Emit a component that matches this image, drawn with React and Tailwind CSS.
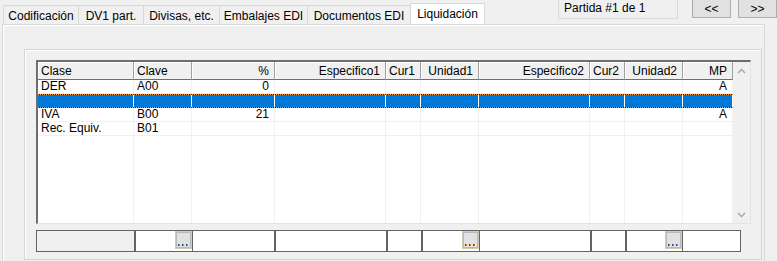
import React from 'react';

const tabs = [
  { label: 'Codificación', w: 'w-[75px]' },
  { label: 'DV1 part.', w: 'w-[65px]' },
  { label: 'Divisas, etc.', w: 'w-[76px]' },
  { label: 'Embalajes EDI', w: 'w-[88px]' },
  { label: 'Documentos EDI', w: 'w-[103px]' },
];

const cols = [
  { h: 'Clase', w: 'w-[96px]', a: 'l' },
  { h: 'Clave', w: 'w-[58px]', a: 'l' },
  { h: '%', w: 'w-[83px]', a: 'r' },
  { h: 'Especifico1', w: 'w-[111px]', a: 'r' },
  { h: 'Cur1', w: 'w-[35px]', a: 'r' },
  { h: 'Unidad1', w: 'w-[58px]', a: 'r' },
  { h: 'Especifico2', w: 'w-[111px]', a: 'r' },
  { h: 'Cur2', w: 'w-[35px]', a: 'r' },
  { h: 'Unidad2', w: 'w-[58px]', a: 'r' },
  { h: 'MP', w: 'w-[50px]', a: 'r' },
];

const rows = [
  ['DER', 'A00', '0', '', '', '', '', '', '', 'A'],
  null,
  ['IVA', 'B00', '21', '', '', '', '', '', '', 'A'],
  ['Rec. Equiv.', 'B01', '', '', '', '', '', '', '', ''],
];

const foot = [
  { w: 'w-[97px]', sep: '', bg: 'bg-[#f0f0f0]' },
  { w: 'w-[58px]', sep: 'border-l-2', bg: 'bg-white', btn: true },
  { w: 'w-[82px]', sep: 'border-l', bg: 'bg-white' },
  { w: 'w-[112px]', sep: 'border-l-2', bg: 'bg-white' },
  { w: 'w-[35px]', sep: 'border-l-2', bg: 'bg-white' },
  { w: 'w-[58px]', sep: 'border-l-2', bg: 'bg-white', btn: true },
  { w: 'w-[111px]', sep: 'border-l', bg: 'bg-white' },
  { w: 'w-[35px]', sep: 'border-l-2', bg: 'bg-white' },
  { w: 'w-[57px]', sep: 'border-l-2', bg: 'bg-white', btn: true },
  { w: 'w-[58px]', sep: 'border-l', bg: 'bg-white' },
];

function Chevron({ up }) {
  return (
    <svg width="9" height="6" viewBox="0 0 9 6">
      <path
        d={up ? 'M1 5 L4.5 1.5 L8 5' : 'M1 1 L4.5 4.5 L8 1'}
        fill="none"
        stroke="#a6a6a6"
        strokeWidth="1.4"
      />
    </svg>
  );
}

function DotsButton() {
  return (
    <div className="ml-auto w-[17px] h-[18px] border border-[#cfcdb4] bg-[#e1e1e1] shadow-[inset_0_0_0_1px_#b9b9b9]">
      <div className="flex gap-[2px] pl-[2px] pt-[12px]">
        {[0, 1, 2].map((i) => (
          <div key={i} className="flex h-[2px]">
            <div className="w-px h-[2px] bg-[#1d4f91]" />
            <div className="w-px h-[2px] bg-[#e0801c]" />
          </div>
        ))}
      </div>
    </div>
  );
}

export default function App() {
  return (
    <div className="w-[777px] h-[261px] bg-[#f0f0f0] overflow-hidden text-[12px] leading-[14px] text-black font-['Liberation_Sans',Arial,sans-serif]">
      {/* top strip */}
      <div className="flex h-[24px]">
        <div className="flex items-end pl-[3px]">
          {tabs.map((t) => (
            <div
              key={t.label}
              className={`${t.w} h-[19px] border-l border-t border-[#d9d9d9] bg-[#f0f0f0] flex justify-center pt-[3px] whitespace-nowrap`}
            >
              {t.label}
            </div>
          ))}
          <div className="w-[75px] h-[21px] border-l border-t border-r border-[#d9d9d9] bg-white flex justify-center pt-[3px] whitespace-nowrap">
            Liquidación
          </div>
        </div>
        <div className="ml-[73px] w-[128px] h-[19px] border-x border-b border-[#dadada] pl-[5px] pt-[1px] whitespace-nowrap">
          Partida #1 de 1
        </div>
        <div className="ml-[14px] -mt-[1px] w-[39px] h-[19px] shrink-0 border border-[#adadad] bg-[#e1e1e1] flex items-center justify-center">
          &lt;&lt;
        </div>
        <div className="ml-[7px] -mt-[1px] w-[39px] h-[19px] shrink-0 border border-[#adadad] bg-[#e1e1e1] flex items-center justify-center">
          &gt;&gt;
        </div>
      </div>

      {/* tab page */}
      <div className="ml-[2px] w-[763px] h-[237px] border-l border-t border-r border-[#d9d9d9] shadow-[inset_1px_1px_0_#ffffff] pt-[24px] pl-[21px]">
        {/* group box */}
        <div className="w-[738px] h-[211px] border border-[#d5d5d5] shadow-[inset_1px_1px_0_#ffffff] pt-[10px] pl-[11px]">
          {/* grid */}
          <div className="w-[715px] h-[164px] flex border-l-2 border-t-2 border-r border-b border-l-[#6e6e6e] border-t-[#6e6e6e] border-r-[#e3e3e3] border-b-[#e3e3e3] bg-white">
            <div className="w-[695px] flex flex-col">
              {/* header */}
              <div className="flex h-[18px]">
                {cols.map((c) => (
                  <div
                    key={c.h}
                    className={`${c.w} h-[18px] shrink-0 bg-[#f0f0f0] border-r border-b border-r-[#a0a0a0] border-b-[#6e6e6e] shadow-[inset_1px_1px_0_#ffffff] flex items-center whitespace-nowrap ${
                      c.a === 'l' ? 'justify-start pl-[3px]' : 'justify-end pr-[5px]'
                    }`}
                  >
                    {c.h}
                  </div>
                ))}
              </div>
              {/* rows */}
              {rows.map((r, i) =>
                r ? (
                  <div key={i} className="flex h-[14px]">
                    {cols.map((c, j) => (
                      <div
                        key={j}
                        className={`${c.w} h-[14px] shrink-0 border-r border-b border-[#f0f0f0] leading-[13px] flex whitespace-nowrap ${
                          c.a === 'l' ? 'justify-start pl-[3px]' : 'justify-end pr-[5px]'
                        }`}
                      >
                        {r[j]}
                      </div>
                    ))}
                  </div>
                ) : (
                  <div key={i} className="flex h-[14px] border-y border-dotted border-[#f5a040] bg-[#1a1a1a]">
                    {cols.map((c, j) => (
                      <div key={j} className={`${c.w} h-[12px] shrink-0 bg-[#0078d7] border-r border-white`} />
                    ))}
                  </div>
                )
              )}
              {/* filler */}
              <div className="flex flex-1">
                {cols.map((c, j) => (
                  <div key={j} className={`${c.w} shrink-0 border-r border-[#f0f0f0]`} />
                ))}
              </div>
            </div>
            {/* scrollbar */}
            <div className="w-[17px] bg-[#f0f0f0] flex flex-col justify-between">
              <div className="h-[17px] flex items-center justify-center">
                <Chevron up />
              </div>
              <div className="h-[17px] flex items-center justify-center">
                <Chevron />
              </div>
            </div>
          </div>

          {/* footer inputs */}
          <div className="mt-[6px] w-[705px] h-[22px] flex border border-[#646464]">
            {foot.map((f, i) => (
              <div key={i} className={`${f.w} ${f.sep} ${f.bg} shrink-0 border-[#646464] flex items-start`}>
                {f.btn && <DotsButton />}
              </div>
            ))}
          </div>
        </div>
      </div>
    </div>
  );
}
